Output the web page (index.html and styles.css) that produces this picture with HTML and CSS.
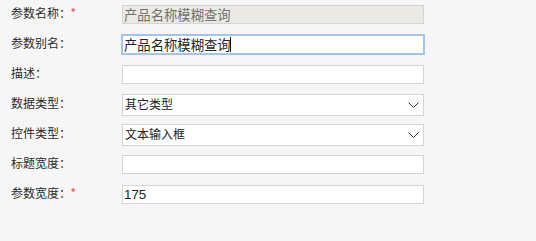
FILE: index.html
```html
<!DOCTYPE html>
<html lang="zh-CN">
<head>
  <meta charset="UTF-8">
  <title>参数设置</title>
  <link rel="stylesheet" href="styles.css">
</head>
<body>

  <!-- 参数属性表单 -->
  <form class="param-form">
    <div class="row">
      <label class="label">参数名称：<span class="req">*</span></label>
      <input class="field" type="text" value="产品名称模糊查询" disabled>
    </div>

    <div class="row">
      <label class="label">参数别名：</label>
      <span class="field-wrap">
        <input class="field focused" type="text" value="产品名称模糊查询">
        <span class="caret"></span>
      </span>
    </div>

    <div class="row">
      <label class="label">描述：</label>
      <input class="field" type="text" value="">
    </div>

    <div class="row">
      <label class="label">数据类型：</label>
      <span class="field-wrap select-wrap">
        <select class="field select">
          <option>其它类型</option>
        </select>
        <svg class="chevron" width="11" height="6" viewBox="0 0 11 6"><path d="M0.5 0.5 L5.5 5.5 L10.5 0.5" fill="none" stroke="#333" stroke-width="1"/></svg>
      </span>
    </div>

    <div class="row">
      <label class="label">控件类型：</label>
      <span class="field-wrap select-wrap">
        <select class="field select">
          <option>文本输入框</option>
        </select>
        <svg class="chevron" width="11" height="6" viewBox="0 0 11 6"><path d="M0.5 0.5 L5.5 5.5 L10.5 0.5" fill="none" stroke="#333" stroke-width="1"/></svg>
      </span>
    </div>

    <div class="row">
      <label class="label">标题宽度：</label>
      <input class="field" type="text" value="">
    </div>

    <div class="row">
      <label class="label">参数宽度：<span class="req">*</span></label>
      <input class="field" type="text" value="175">
    </div>
  </form>

</body>
</html>
```

FILE: styles.css
```css
body {
  margin: 0;
  background-color: #f6f6f6;
  font-family: "Liberation Sans", "Noto Sans CJK SC", sans-serif;
  color: #333;
}

.param-form {
  padding-left: 11px;
}

.row {
  display: flex;
  align-items: flex-start;
  box-sizing: border-box;
  height: 30px;
  padding-top: 5px;
}

.label {
  width: 111px;
  line-height: 19px;
  font-family: "Liberation Sans", "Noto Sans CJK JP", sans-serif;
  font-size: 12px;
  color: #2b2b2b;
}

.req {
  color: #e8333b;
  font-size: 11px;
  vertical-align: top;
  line-height: 14px;
}

.field-wrap {
  position: relative;
  display: flex;
}

.select-wrap {
  margin-top: -1px;
}

.field {
  box-sizing: border-box;
  width: 302px;
  height: 19px;
  margin: 0;
  padding: 0 1px;
  border: 1px solid #d4d4d4;
  background-color: #fff;
  font-family: "Liberation Sans", "Noto Sans CJK SC", sans-serif;
  font-size: 13.33px;
  color: #222;
  outline: none;
}

.field:disabled {
  background-color: #ebe9e3;
  color: #707070;
}

/* 当前获得焦点的输入框 */
.focused {
  border-color: #a4c1f4;
  box-shadow: 0 0 0 1px #a4c1f4;
}

.caret {
  position: absolute;
  left: 108px;
  top: 2px;
  width: 1px;
  height: 15px;
  background-color: #111;
}

.select {
  height: 22px;
  padding: 0 2px;
  font-size: 12px;
  appearance: none;
  -webkit-appearance: none;
}

.chevron {
  position: absolute;
  right: 5px;
  top: 8px;
  pointer-events: none;
}
```
